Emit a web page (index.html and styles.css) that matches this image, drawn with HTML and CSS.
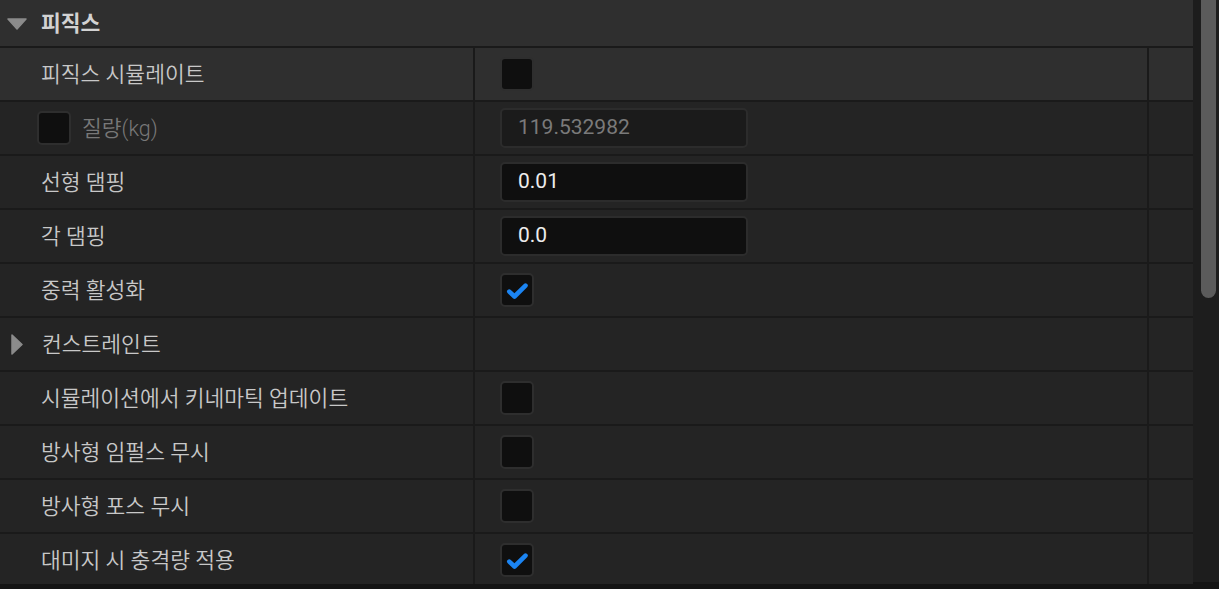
FILE: index.html
```html
<!DOCTYPE html>
<html lang="ko">
<head>
<meta charset="utf-8">
<link rel="stylesheet" href="styles.css">
</head>
<body>
<div class="panel">
  <div class="content">
    <div class="header">
      <svg class="caret-down" width="20" height="12" viewBox="0 0 20 12"><path d="M1 1 L19 1 L10 11 Z" fill="#8b8b8b" stroke="#8b8b8b" stroke-width="1.5" stroke-linejoin="round"/></svg>
      <span class="header-title">피직스</span>
    </div>
    <div class="row row-hover">
      <div class="cell name">피직스 시뮬레이트</div>
      <div class="cell value"><span class="check"></span></div>
      <div class="cell extra"></div>
    </div>
    <div class="row">
      <div class="cell name name-check"><span class="check"></span><span class="disabled-label">질량(kg)</span></div>
      <div class="cell value"><div class="field field-disabled">119.532982</div></div>
      <div class="cell extra"></div>
    </div>
    <div class="row">
      <div class="cell name">선형 댐핑</div>
      <div class="cell value"><div class="field">0.01</div></div>
      <div class="cell extra"></div>
    </div>
    <div class="row">
      <div class="cell name">각 댐핑</div>
      <div class="cell value"><div class="field">0.0</div></div>
      <div class="cell extra"></div>
    </div>
    <div class="row">
      <div class="cell name">중력 활성화</div>
      <div class="cell value"><span class="check"><svg width="34" height="34" viewBox="0 0 34 34"><path d="M9.3 18.6 L14.5 23.5 L25.5 12.6" fill="none" stroke="#1b84f2" stroke-width="4.6" stroke-linecap="round" stroke-linejoin="round"/></svg></span></div>
      <div class="cell extra"></div>
    </div>
    <div class="row">
      <div class="cell name name-group"><svg class="caret-right" width="12" height="21" viewBox="0 0 12 21"><path d="M1 1 L11 10.5 L1 20 Z" fill="#8b8b8b" stroke="#8b8b8b" stroke-width="1.5" stroke-linejoin="round"/></svg><span class="group-label">컨스트레인트</span></div>
      <div class="cell value"></div>
      <div class="cell extra"></div>
    </div>
    <div class="row">
      <div class="cell name">시뮬레이션에서 키네마틱 업데이트</div>
      <div class="cell value"><span class="check"></span></div>
      <div class="cell extra"></div>
    </div>
    <div class="row">
      <div class="cell name">방사형 임펄스 무시</div>
      <div class="cell value"><span class="check"></span></div>
      <div class="cell extra"></div>
    </div>
    <div class="row">
      <div class="cell name">방사형 포스 무시</div>
      <div class="cell value"><span class="check"></span></div>
      <div class="cell extra"></div>
    </div>
    <div class="row">
      <div class="cell name">대미지 시 충격량 적용</div>
      <div class="cell value"><span class="check"><svg width="34" height="34" viewBox="0 0 34 34"><path d="M9.3 18.6 L14.5 23.5 L25.5 12.6" fill="none" stroke="#1b84f2" stroke-width="4.6" stroke-linecap="round" stroke-linejoin="round"/></svg></span></div>
      <div class="cell extra"></div>
    </div>
  </div>
  <div class="scrollbar"><div class="thumb"></div></div>
</div>
</body>
</html>
```

FILE: styles.css
```css
* { box-sizing: border-box; }
html, body {
  margin: 0;
  padding: 0;
  background: #141414;
  width: 1219px;
  height: 589px;
  overflow: hidden;
}
body {
  font-family: Roboto, "Noto Sans CJK KR", sans-serif;
  font-size: 21.5px;
  font-weight: 350;
  color: #c8c8c8;
}
.panel {
  display: flex;
  height: 584px;
  overflow: hidden;
}
.content {
  width: 1193px;
  display: flex;
  flex-direction: column;
  background: #1a1a1a;
}
.header {
  flex: 0 0 46px;
  height: 46px;
  background: #2f2f2f;
  border-bottom: 2px solid #1a1a1a;
  display: flex;
  align-items: center;
  padding-left: 7px;
  box-sizing: content-box;
}
.caret-down { margin-top: 1px; }
.header-title {
  margin-left: 14px;
  font-weight: 700;
  color: #d2d2d2;
  font-size: 21.5px;
  margin-top: -4px;
}
.row {
  flex: 0 0 52px;
  height: 52px;
  display: grid;
  grid-template-columns: 473px 672px 44px;
  column-gap: 2px;
  background: #1a1a1a;
  box-sizing: content-box;
  border-bottom: 2px solid #1a1a1a;
}
.cell {
  background: #242424;
  display: flex;
  align-items: center;
}
.row-hover .cell { background: #2f2f2f; }
.name { padding-left: 41px; padding-bottom: 3px; }
.name-check { padding-left: 37px; gap: 11px; padding-bottom: 0; }
.name-check .disabled-label { margin-top: -3px; }
.name-group { padding-left: 11px; gap: 19px; padding-bottom: 0; }
.group-label { margin-top: -3px; }
.disabled-label { color: #787878; }
.value { padding-left: 25px; }
.check {
  width: 34px;
  height: 34px;
  border-radius: 5px;
  background: #0f0f0f;
  border: 2px solid #2e2e2e;
  display: block;
  position: relative;
}
.check svg {
  position: absolute;
  left: -2px;
  top: -2px;
}
.field {
  width: 248px;
  height: 40px;
  border-radius: 5px;
  background: #0f0f0f;
  border: 2px solid #2c2c2c;
  padding-left: 16px;
  padding-bottom: 2px;
  display: flex;
  align-items: center;
  color: #ececec;
  font-size: 21px;
  font-weight: 400;
}
.field-disabled {
  background: #1b1b1b;
  color: #7a7a7a;
}
.scrollbar {
  width: 26px;
  height: 582px;
  background: #1d1d1d;
  padding-left: 8px;
  padding-right: 3px;
}
.thumb {
  width: 15px;
  height: 298px;
  background: #5b5b5b;
  border-radius: 0 0 8px 8px;
}
```
